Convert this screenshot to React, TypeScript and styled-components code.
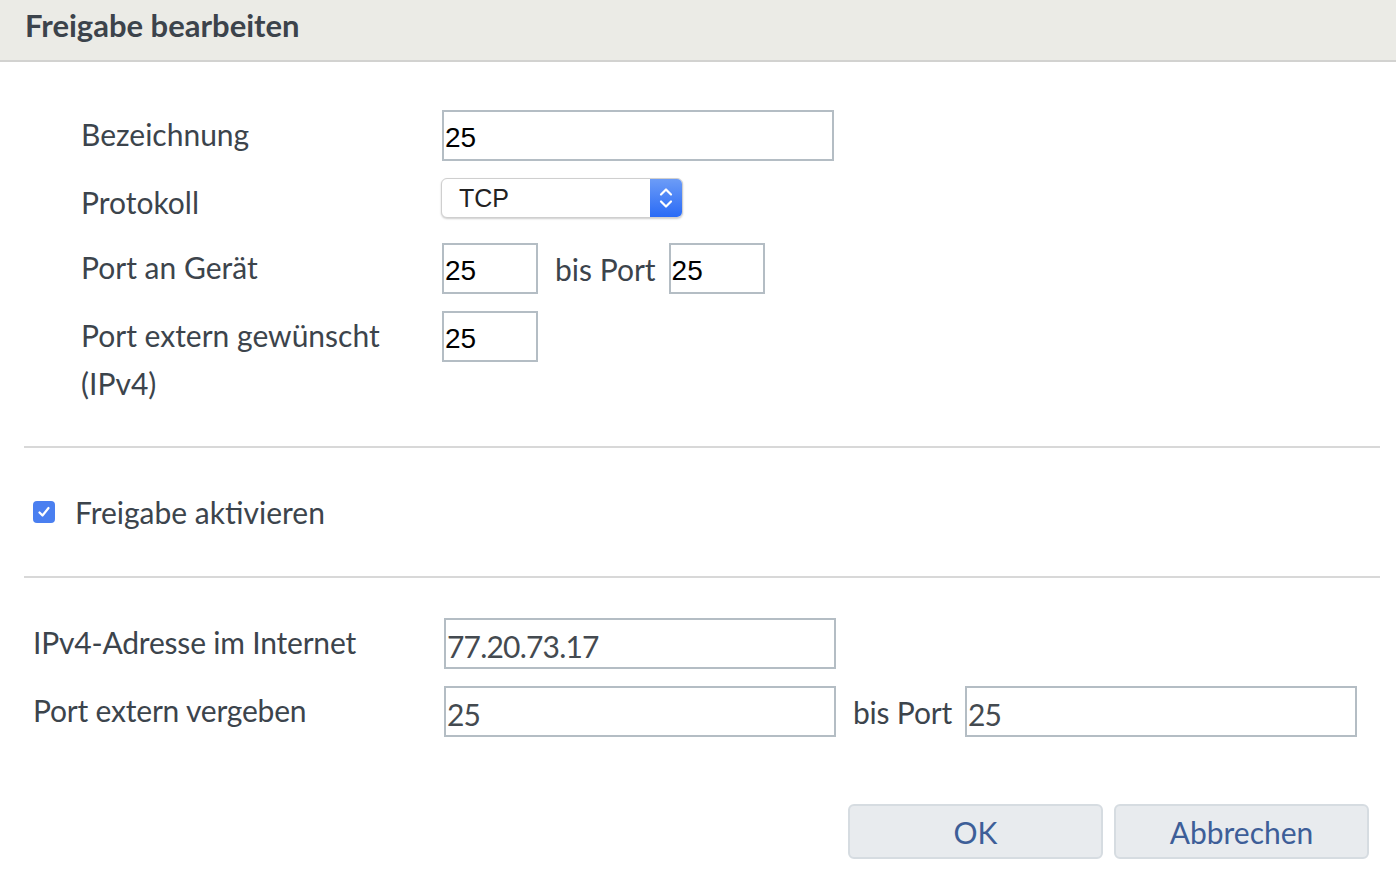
import React from "react";
import styled, { createGlobalStyle } from "styled-components";

const GlobalStyle = createGlobalStyle`
  body {
    margin: 0;
    background: #ffffff;
    font-family: Lato, "Noto Sans", sans-serif;
  }
`;

const Dialog = styled.div`
  width: 1396px;
  min-height: 884px;
  background: #ffffff;
  color: #3c444c;
`;

const Header = styled.div`
  height: 60px;
  background: #ebebe6;
  border-bottom: 2px solid #d2d2d0;
  display: flex;
  align-items: flex-start;
  padding-left: 25px;
`;

const Title = styled.h1`
  margin: 0;
  font-size: 31px;
  line-height: 50px;
  font-weight: 700;
  color: #3c434b;
`;

const Body = styled.div`
  padding: 0 16px 0 24px;
`;

const FormGrid = styled.div<{ $indent: number; $labelWidth: number }>`
  display: grid;
  grid-template-columns: ${(p) => p.$labelWidth}px 1fr;
  row-gap: 17px;
  align-items: start;
  padding-left: ${(p) => p.$indent}px;
`;

const Label = styled.div<{ $tight?: boolean }>`
  font-size: 30px;
  line-height: 48px;
  color: #3c444c;
  letter-spacing: ${(p) => (p.$tight ? "-0.2px" : "0")};
`;

const Field = styled.div`
  display: flex;
  align-items: center;
`;

const TextInput = styled.div<{ $width: number; $soft?: boolean }>`
  box-sizing: border-box;
  width: ${(p) => p.$width}px;
  height: 51px;
  border: 2px solid #b4bdc4;
  background: #fff;
  display: flex;
  align-items: center;
  padding-left: 1px;
  padding-top: 4px;
  font-family: ${(p) => (p.$soft ? 'Lato, "Noto Sans", sans-serif' : '"Liberation Sans", Arial, sans-serif')};
  font-size: ${(p) => (p.$soft ? 30 : 28)}px;
  letter-spacing: ${(p) => (p.$soft ? "-0.8px" : "0")};
  color: ${(p) => (p.$soft ? "#444a50" : "#000")};
`;

const Between = styled.span<{ $tight?: boolean }>`
  font-size: 30px;
  color: #3c444c;
  margin: 0 13px 0 17px;
  letter-spacing: ${(p) => (p.$tight ? "-0.2px" : "0")};
`;

const Select = styled.div`
  box-sizing: border-box;
  width: 242px;
  height: 40px;
  margin-left: -1px;
  border: 1px solid #cfcfcf;
  border-radius: 6px;
  box-shadow: 0 1px 2px rgba(0, 0, 0, 0.2);
  background: #fff;
  display: flex;
  align-items: stretch;
  overflow: hidden;
`;

const SelectValue = styled.div`
  flex: 1;
  display: flex;
  align-items: center;
  padding-left: 17px;
  font-family: "Liberation Sans", Arial, sans-serif;
  font-size: 25px;
  color: #222;
`;

const SelectArrows = styled.div`
  width: 32px;
  background: linear-gradient(#6c9cf7, #2a6bf6);
  display: flex;
  align-items: center;
  justify-content: center;
`;

const Divider = styled.hr<{ $top: number }>`
  border: 0;
  border-top: 2px solid #d8d8d8;
  margin: ${(p) => p.$top}px 0 0 0;
  width: 1356px;
`;

const CheckRow = styled.label`
  display: flex;
  align-items: center;
  height: 128px;
  padding-left: 9px;
  gap: 20px;
  font-size: 30px;
  color: #3c444c;
`;

const CheckBox = styled.span`
  width: 22px;
  height: 22px;
  border-radius: 4px;
  background: #4a7ff0;
  display: flex;
  align-items: center;
  justify-content: center;
`;

const Section = styled.div<{ $top: number }>`
  padding-top: ${(p) => p.$top}px;
`;

const Footer = styled.div`
  display: flex;
  justify-content: flex-end;
  gap: 11px;
  padding: 67px 11px 0 0;
`;

const Button = styled.button`
  width: 255px;
  height: 55px;
  border: 2px solid #d6dce1;
  border-radius: 6px;
  background: #e8ebee;
  font-family: Lato, "Noto Sans", sans-serif;
  font-size: 30px;
  color: #3d5e98;
  padding-top: 2px;
`;

const Chevrons = () => (
  <svg width="16" height="26" viewBox="0 0 16 26" fill="none" stroke="#fff" strokeWidth="2.2" strokeLinecap="round" strokeLinejoin="round">
    <path d="M3 9.5 8 4.5 13 9.5" />
    <path d="M3 16.5 8 21.5 13 16.5" />
  </svg>
);

const Check = () => (
  <svg width="14" height="14" viewBox="0 0 14 14" fill="none" stroke="#fff" strokeWidth="2.2" strokeLinecap="round" strokeLinejoin="round">
    <path d="M2.5 7.5 5.5 10.5 11.5 3" />
  </svg>
);

export default function App() {
  return (
    <>
      <GlobalStyle />
      <Dialog>
        <Header>
          <Title>Freigabe bearbeiten</Title>
        </Header>
        <Body>
          <Section $top={48}>
            <FormGrid $indent={57} $labelWidth={361}>
              <Label>Bezeichnung</Label>
              <Field>
                <TextInput $width={392}>25</TextInput>
              </Field>
              <Label>Protokoll</Label>
              <Field>
                <Select>
                  <SelectValue>TCP</SelectValue>
                  <SelectArrows>
                    <Chevrons />
                  </SelectArrows>
                </Select>
              </Field>
              <Label>Port an Gerät</Label>
              <Field>
                <TextInput $width={96}>25</TextInput>
                <Between>bis Port</Between>
                <TextInput $width={96}>25</TextInput>
              </Field>
              <Label>
                Port extern gewünscht
                <br />
                (IPv4)
              </Label>
              <Field>
                <TextInput $width={96}>25</TextInput>
              </Field>
            </FormGrid>
          </Section>
          <Divider $top={39} />
          <CheckRow>
            <CheckBox>
              <Check />
            </CheckBox>
            Freigabe aktivieren
          </CheckRow>
          <Divider $top={0} />
          <Section $top={40}>
            <FormGrid $indent={9} $labelWidth={411}>
              <Label $tight>IPv4-Adresse im Internet</Label>
              <Field>
                <TextInput $width={392} $soft>
                  77.20.73.17
                </TextInput>
              </Field>
              <Label $tight>Port extern vergeben</Label>
              <Field>
                <TextInput $width={392} $soft>
                  25
                </TextInput>
                <Between $tight>bis Port</Between>
                <TextInput $width={392} $soft>
                  25
                </TextInput>
              </Field>
            </FormGrid>
          </Section>
          <Footer>
            <Button>OK</Button>
            <Button>Abbrechen</Button>
          </Footer>
        </Body>
      </Dialog>
    </>
  );
}
